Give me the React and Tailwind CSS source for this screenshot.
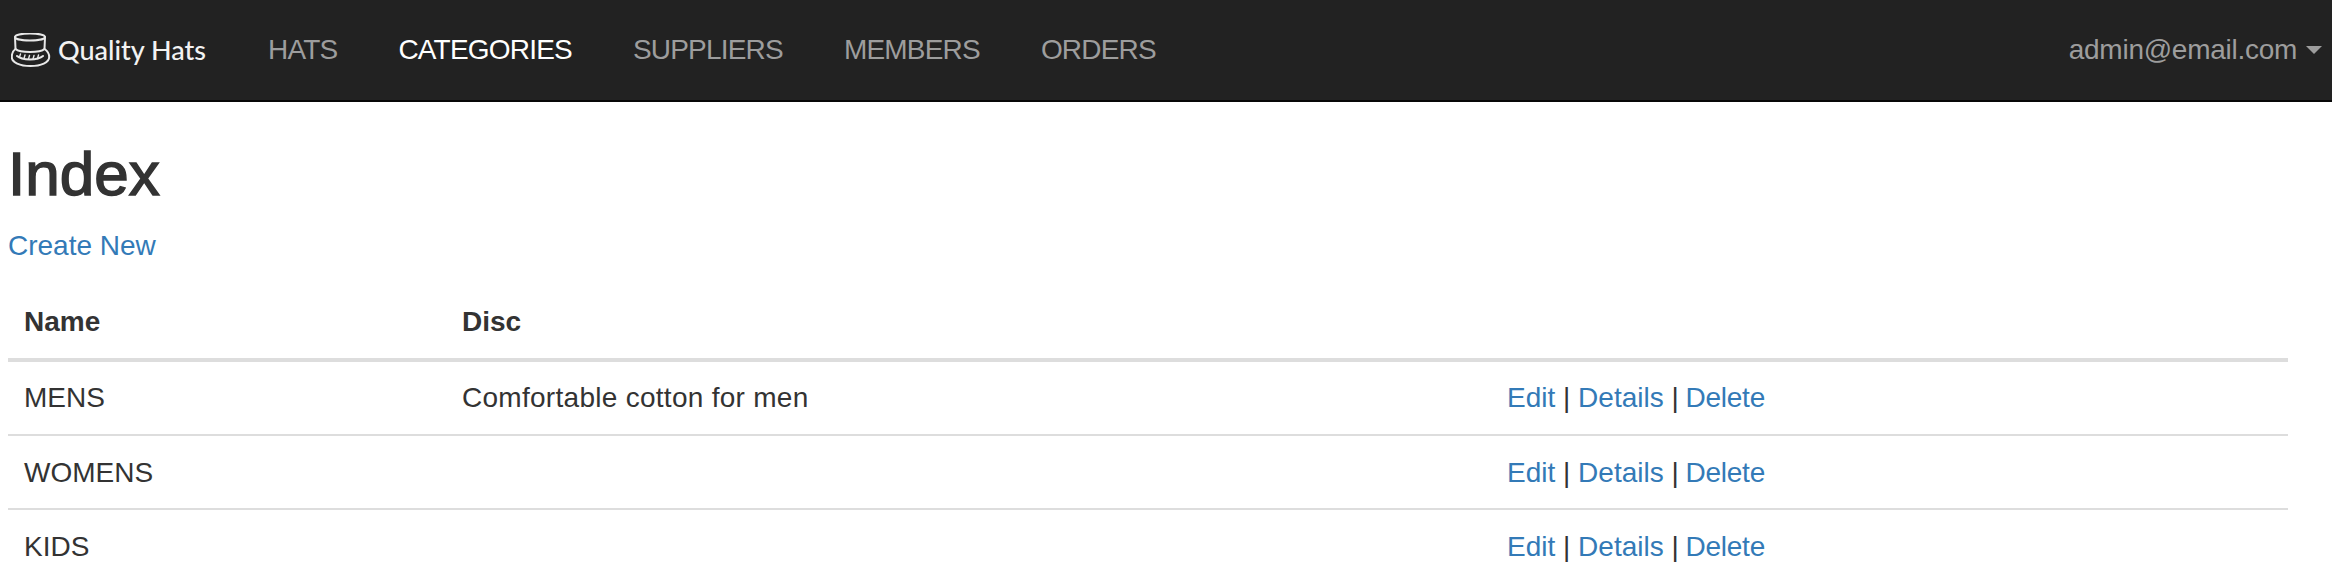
const navItems = [
  {label: "HATS", active: false},
  {label: "CATEGORIES", active: true},
  {label: "SUPPLIERS", active: false},
  {label: "MEMBERS", active: false},
  {label: "ORDERS", active: false},
]

const rows = [
  {name: "MENS", disc: "Comfortable cotton for men"},
  {name: "WOMENS", disc: ""},
  {name: "KIDS", disc: ""},
]

const HatIcon = () => (
  <svg className="w-[40px] h-[34px] shrink-0" viewBox="0 0 40 34" fill="none" stroke="#e8e8e8" strokeWidth="2" strokeLinecap="round" strokeLinejoin="round">
    <ellipse cx="19" cy="4" rx="15" ry="3.5" />
    <path d="M4 4 L4.5 16 C9 20 29 20 33.5 16 L34 4" />
    <path d="M4.5 16 C1.5 18 0.8 21 0.8 24 C0.8 29.5 9 33 19.5 33 C30 33 38.2 29.5 38.2 24 C38.2 21 36.5 18 33.5 16" />
    <path d="M6 23 C11 27.5 27 27.5 32 23" />
    <path d="M9.5 21 L8.5 24 M14 22 L13 25.5 M18.5 22.5 L17.5 26 M23 22.5 L22 26 M27.5 22 L26.5 25.5" strokeWidth="1.4" />
  </svg>
)

const RowLinks = () => (
  <>
    <a className="text-[#337ab7]" href="#">Edit</a> | <a className="text-[#337ab7]" href="#">Details</a> | <a className="text-[#337ab7] -ml-[1px] tracking-[-0.25px]" href="#">Delete</a>
  </>
)

export default function App() {
  return (
    <div className="min-h-[588px] bg-white text-[28px] leading-[40px] text-[#333] font-['Liberation_Sans',Arial,sans-serif]">
      <nav className="h-[102px] bg-[#222] border-b-2 border-[#080808] flex items-center justify-between">
        <div className="flex items-center">
          <a className="flex items-center gap-[8px] pl-[11px] w-[268px] text-[#f2f2f2] text-[27px] font-['Lato',sans-serif] font-medium" href="#">
            <HatIcon />
            <span className="-ml-[1px]">Quality Hats</span>
          </a>
          <ul className="flex items-center gap-[61px] text-[#9d9d9d] tracking-[-0.8px]">
            {navItems.map((item) => (
              <li key={item.label} className={item.active ? "text-white" : ""}>{item.label}</li>
            ))}
          </ul>
        </div>
        <div className="flex items-center gap-[9px] pr-[10px] text-[#9d9d9d]">
          <span className="tracking-[-0.27px]">admin@email.com</span>
          <span className="w-0 h-0 border-x-[8px] border-x-transparent border-t-[8px] border-t-[#9d9d9d]" />
        </div>
      </nav>

      <main className="pl-[8px] pr-[44px]">
        <h2 className="mt-[39px] mb-[19px] text-[62px] leading-[66px] font-medium [-webkit-text-stroke:1.5px_#333]">Index</h2>
        <p className="mb-[20px]">
          <a className="text-[#337ab7]" href="#">Create New</a>
        </p>
        <table className="w-full table-fixed border-collapse">
          <colgroup>
            <col className="w-[438px]" />
            <col className="w-[1045px]" />
            <col />
          </colgroup>
          <thead>
            <tr className="border-b-4 border-[#ddd]">
              <th className="p-[16px] text-left font-bold">Name</th>
              <th className="p-[16px] text-left font-bold">Disc</th>
              <th className="p-[16px]"></th>
            </tr>
          </thead>
          <tbody>
            {rows.map((row, i) => (
              <tr key={row.name} className={i > 0 ? "border-t-2 border-[#ddd]" : ""}>
                <td className={i > 0 ? "px-[16px] pt-[17px] pb-[15px]" : "p-[16px]"}>{row.name}</td>
                <td className={i > 0 ? "px-[16px] pt-[17px] pb-[15px]" : "p-[16px] tracking-[0.28px]"}>{row.disc}</td>
                <td className={i > 0 ? "px-[16px] pt-[17px] pb-[15px]" : "p-[16px]"}><RowLinks /></td>
              </tr>
            ))}
          </tbody>
        </table>
      </main>
    </div>
  )
}
